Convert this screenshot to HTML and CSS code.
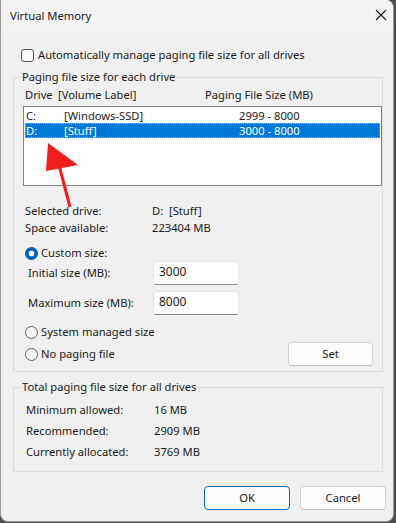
FILE: index.html
```html
<!DOCTYPE html>
<html lang="en">
<head>
  <meta charset="UTF-8" />
  <meta name="viewport" content="width=device-width, initial-scale=1" />
  <title>Virtual Memory</title>
  <link rel="stylesheet" href="styles.css">
</head>
<body>
  <div class="window">
    <div class="titlebar">
      <span>Virtual Memory</span>
      <svg class="close" width="12" height="12" viewBox="0 0 12 12">
        <path d="M1 1 L11 11 M11 1 L1 11" stroke="#1a1a1a" stroke-width="1.1" fill="none" />
      </svg>
    </div>

    <div class="content">
      <div class="check-row">
        <span class="checkbox"></span>
        <span>Automatically manage paging file size for all drives</span>
      </div>

      <!-- Per drive settings -->
      <fieldset class="group drives">
        <legend>Paging file size for each drive</legend>
        <div class="cols">
          <span class="col-drive">Drive</span>
          <span class="col-label">[Volume Label]</span>
          <span>Paging File Size (MB)</span>
        </div>
        <div class="list">
          <div class="row">
            <span>C:</span><span>[Windows-SSD]</span><span>2999 - 8000</span>
          </div>
          <div class="row selected">
            <span>D:</span><span>[Stuff]</span><span>3000 - 8000</span>
          </div>
        </div>

        <div class="info">
          <span>Selected drive:</span><span>D:&nbsp; [Stuff]</span>
          <span>Space available:</span><span>223404 MB</span>
        </div>

        <div class="radio-row custom">
          <span class="radio checked"></span>
          <span>Custom size:</span>
        </div>
        <div class="field-row first">
          <label for="initial">Initial size (MB):</label>
          <input id="initial" type="text" value="3000" />
        </div>
        <div class="field-row">
          <label for="maximum">Maximum size (MB):</label>
          <input id="maximum" type="text" value="8000" />
        </div>
        <div class="radio-row system">
          <span class="radio"></span>
          <span>System managed size</span>
        </div>
        <div class="set-row">
          <div class="radio-row">
            <span class="radio"></span>
            <span>No paging file</span>
          </div>
          <button class="btn set">Set</button>
        </div>
      </fieldset>

      <!-- Totals -->
      <fieldset class="group totals">
        <legend>Total paging file size for all drives</legend>
        <div class="total-grid">
          <span>Minimum allowed:</span><span>16 MB</span>
          <span>Recommended:</span><span>2909 MB</span>
          <span>Currently allocated:</span><span>3769 MB</span>
        </div>
      </fieldset>

      <div class="actions">
        <button class="btn primary">OK</button>
        <button class="btn">Cancel</button>
      </div>
    </div>

    <svg class="arrow" width="40" height="70" viewBox="0 0 40 70">
      <line x1="17" y1="22" x2="28" y2="64" stroke="#f21b1b" stroke-width="3" />
      <polygon points="6,0 4,28 36,22" fill="#f21b1b" />
    </svg>
  </div>
</body>
</html>
```

FILE: styles.css
```css
body {
  margin: 0;
  background: #4d4d4d;
  font-family: 'Noto Sans', 'Open Sans', sans-serif;
  font-size: 11.2px;
  color: #1a1a1a;
}
.window {
  position: relative;
  width: 392px;
  height: 521px;
  background: #f0f0f0;
  border: 1px solid #9a9a9a;
  border-top: none;
  border-radius: 0 8px 8px 8px;
  overflow: hidden;
}
.titlebar {
  height: 31px;
  background: #f3f3f3;
  display: flex;
  align-items: center;
  justify-content: space-between;
  padding: 0 6px 0 9px;
  line-height: 14px;
}
.close {
  margin-top: -2px;
}
.content {
  line-height: 14px;
}
.check-row {
  display: flex;
  align-items: center;
  height: 16px;
  margin: 16px 0 0 20px;
}
.checkbox {
  width: 11px;
  height: 11px;
  border: 1px solid #5a5a5a;
  border-radius: 3px;
  background: #fbfbfb;
  margin-right: 4px;
}
.group {
  margin: 7px 0 0 12px;
  padding: 0;
  width: 370px;
  box-sizing: border-box;
  border: 1px solid #dcdcdc;
  min-width: 0;
}
.group legend {
  padding: 0 1px;
  margin-left: 7px;
  line-height: 14px;
}
.cols {
  display: flex;
  margin: 4px 0 0 11px;
  height: 14px;
}
.col-drive {
  width: 33px;
}
.col-label {
  width: 147px;
}
.list {
  margin: 4px 0 0 9px;
  width: 359px;
  height: 80px;
  box-sizing: border-box;
  border: 1px solid #828282;
  background: #fff;
  padding: 1px;
}
.row {
  display: grid;
  grid-template-columns: 38px 175px auto;
  height: 15px;
  line-height: 15px;
  padding-left: 1px;
}
.row.selected {
  background: #0078d7;
  color: #fff;
  outline: 1px dotted #f2a65a;
  outline-offset: -1px;
}
.info {
  display: grid;
  grid-template-columns: 127px auto;
  row-gap: 3px;
  margin: 18px 0 0 11px;
}
.radio-row {
  display: flex;
  align-items: center;
  height: 14px;
  margin-left: 11px;
}
.radio-row.custom {
  margin-top: 11px;
}
.radio-row.system {
  margin-top: 10px;
}
.radio {
  width: 11px;
  height: 11px;
  border: 1px solid #5f5f5f;
  border-radius: 50%;
  background: #f7f7f7;
  margin-right: 3px;
}
.radio.checked {
  width: 13px;
  height: 13px;
  border: none;
  background: radial-gradient(circle, #fff 0 2.6px, #005fb8 3.2px);
}
.field-row {
  display: flex;
  align-items: center;
  height: 24px;
  margin: 6px 0 0 14px;
}
.field-row.first {
  margin-top: 1px;
}
.field-row label {
  width: 125px;
}
.field-row input {
  width: 86px;
  height: 24px;
  box-sizing: border-box;
  border: 1px solid #e5e5e5;
  border-bottom: 1px solid #8a8a8a;
  border-radius: 3px;
  background: #fff;
  font: inherit;
  font-size: 12px;
  color: #1a1a1a;
  padding: 0 0 3px 5px;
}
.set-row {
  display: flex;
  align-items: center;
  justify-content: space-between;
  height: 24px;
  margin-top: 3px;
  padding-right: 9px;
  margin-bottom: 5px;
}
.set-row .radio-row {
  margin-left: 11px;
}
.btn {
  width: 86px;
  height: 24px;
  border: 1px solid #d3d3d3;
  border-bottom-color: #bfbfbf;
  border-radius: 4px;
  background: #fdfdfd;
  font: inherit;
  color: #1a1a1a;
  padding: 0;
}
.btn.set {
  width: 85px;
}
.btn.primary {
  border-color: #0067c0;
}
.totals {
  margin-top: 8px;
}
.total-grid {
  display: grid;
  grid-template-columns: 128px auto;
  row-gap: 7px;
  margin: 9px 0 12px 12px;
}
.actions {
  display: flex;
  justify-content: flex-end;
  gap: 10px;
  margin-top: 14px;
  padding-right: 7px;
}
.arrow {
  position: absolute;
  left: 41px;
  top: 143px;
}
```
